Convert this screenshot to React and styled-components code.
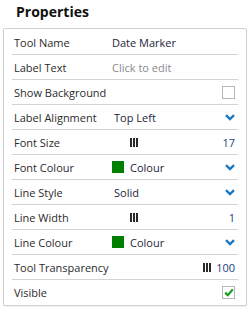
import React from 'react';
import styled, { createGlobalStyle } from 'styled-components';

const rows = [
  { label: 'Tool Name', kind: 'text', value: 'Date Marker' },
  { label: 'Label Text', kind: 'placeholder', value: 'Click to edit' },
  { label: 'Show Background', kind: 'check', checked: false },
  { label: 'Label Alignment', kind: 'select', value: 'Top Left' },
  { label: 'Font Size', kind: 'slider', value: '17' },
  { label: 'Font Colour', kind: 'colour', colour: '#008000' },
  { label: 'Line Style', kind: 'select', value: 'Solid' },
  { label: 'Line Width', kind: 'slider', value: '1' },
  { label: 'Line Colour', kind: 'colour', colour: '#008000' },
  { label: 'Tool Transparency', kind: 'sliderRight', value: '100' },
  { label: 'Visible', kind: 'check', checked: true },
];

function Chevron() {
  return (
    <svg width="10" height="7" viewBox="0 0 10 7">
      <path d="M1 1.2 L5 5 L9 1.2" fill="none" stroke="#1a78c2" strokeWidth="2.4" />
    </svg>
  );
}

function SliderGrip() {
  return (
    <svg width="8" height="9" viewBox="0 0 8 9">
      <rect x="0" y="0" width="2" height="9" fill="#2a2a2a" />
      <rect x="3" y="0" width="2" height="9" fill="#2a2a2a" />
      <rect x="6" y="0" width="2" height="9" fill="#2a2a2a" />
    </svg>
  );
}

function Value({ row }) {
  switch (row.kind) {
    case 'text':
      return <ValueText>{row.value}</ValueText>;
    case 'placeholder':
      return <ValueText $muted>{row.value}</ValueText>;
    case 'check':
      return (
        <Spread>
          <span />
          <CheckBox>
            {row.checked && (
              <svg width="10" height="9" viewBox="0 0 10 9">
                <path d="M1.2 4.6 L3.8 7.2 L8.8 1.4" fill="none" stroke="#1a9a1a" strokeWidth="2.2" />
              </svg>
            )}
          </CheckBox>
        </Spread>
      );
    case 'select':
      return (
        <Spread>
          <ValueText $indent>{row.value}</ValueText>
          <Chevron />
        </Spread>
      );
    case 'slider':
      return (
        <Spread>
          <GripWrap><SliderGrip /></GripWrap>
          <Number>{row.value}</Number>
        </Spread>
      );
    case 'sliderRight':
      return (
        <Spread>
          <span />
          <RightGroup>
            <SliderGrip />
            <Number>{row.value}</Number>
          </RightGroup>
        </Spread>
      );
    case 'colour':
      return (
        <Spread>
          <ColourGroup>
            <Swatch $colour={row.colour} />
            <ValueText>Colour</ValueText>
          </ColourGroup>
          <Chevron />
        </Spread>
      );
    default:
      return null;
  }
}

export default function App() {
  return (
    <>
      <GlobalStyle />
      <Page>
        <Title>Properties</Title>
        <Panel>
          {rows.map((row) => (
            <Row key={row.label}>
              <Label>{row.label}</Label>
              <Value row={row} />
            </Row>
          ))}
        </Panel>
      </Page>
    </>
  );
}

const GlobalStyle = createGlobalStyle`
  body {
    margin: 0;
    background: #ffffff;
    font-family: "Open Sans", "Noto Sans", sans-serif;
  }
`;

const Page = styled.div`
  width: 252px;
  height: 312px;
  padding: 0 5px 0 3px;
  box-sizing: border-box;
`;

const Title = styled.h2`
  margin: 0;
  padding: 2px 0 0 13px;
  height: 28px;
  box-sizing: border-box;
  font-size: 14px;
  font-weight: 700;
  line-height: 20px;
  color: #111;
`;

const Panel = styled.div`
  border: 1px solid #cfcfcf;
  border-radius: 2px;
  padding: 1px 8px 0 8px;
  box-shadow: 0 1px 1px rgba(0, 0, 0, 0.06);
`;

const Row = styled.div`
  display: grid;
  grid-template-columns: 98px 1fr;
  align-items: center;
  height: 25px;
  padding: 0 3px 0 2px;
  box-sizing: border-box;
  border-bottom: 1px solid #d4d4d4;
  font-size: 11px;
  &:last-child { border-bottom: none; }
`;

const Label = styled.span`
  color: #2b2b2b;
  white-space: nowrap;
`;

const ValueText = styled.span`
  color: ${(p) => (p.$muted ? '#8a8a8a' : '#1e1e3a')};
  padding-left: ${(p) => (p.$indent ? '2px' : '0')};
  white-space: nowrap;
`;

const Spread = styled.div`
  display: flex;
  align-items: center;
  justify-content: space-between;
`;

const GripWrap = styled.span`
  display: flex;
  padding-left: 18px;
`;

const RightGroup = styled.span`
  display: flex;
  align-items: center;
  gap: 5px;
`;

const Number = styled.span`
  color: #24407a;
`;

const ColourGroup = styled.span`
  display: flex;
  align-items: center;
  gap: 6px;
`;

const Swatch = styled.span`
  width: 12px;
  height: 12px;
  background: ${(p) => p.$colour};
`;

const CheckBox = styled.span`
  display: flex;
  align-items: center;
  justify-content: center;
  width: 11px;
  height: 11px;
  border: 1px solid #b8b8b8;
  background: #fff;
`;
